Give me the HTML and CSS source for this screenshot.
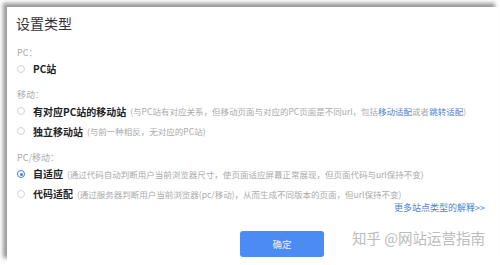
FILE: index.html
```html
<!DOCTYPE html>
<html lang="zh-CN">
  <head>
    <meta charset="UTF-8" />
    <meta name="viewport" content="width=device-width, initial-scale=1.0" />
    <title>设置类型</title>
    <link rel="stylesheet" href="styles.css">
  </head>
  <body>
    <div class="dialog">
      <h1 class="title">设置类型</h1>

      <div class="group">
        <div class="group-label">PC：</div>
        <div class="option">
          <span class="radio"></span>
          <span class="name">PC站</span>
        </div>
      </div>

      <div class="group">
        <div class="group-label">移动：</div>
        <div class="option">
          <span class="radio"></span>
          <span class="name">有对应PC站的移动站</span>
          <span class="desc">(与PC站有对应关系，但移动页面与对应的PC页面是不同url，包括<a class="link">移动适配</a>或者<a class="link">跳转适配</a>)</span>
        </div>
        <div class="option">
          <span class="radio"></span>
          <span class="name">独立移动站</span>
          <span class="desc">(与前一种相反，无对应的PC站)</span>
        </div>
      </div>

      <div class="group">
        <div class="group-label">PC/移动：</div>
        <div class="option">
          <span class="radio checked"></span>
          <span class="name">自适应</span>
          <span class="desc">(通过代码自动判断用户当前浏览器尺寸，使页面适应屏幕正常展现，但页面代码与url保持不变)</span>
        </div>
        <div class="option">
          <span class="radio"></span>
          <span class="name">代码适配</span>
          <span class="desc">(通过服务器判断用户当前浏览器(pc/移动)，从而生成不同版本的页面，但url保持不变)</span>
        </div>
      </div>

      <div class="more"><a class="link">更多站点类型的解释&gt;&gt;</a></div>

      <div class="actions">
        <button class="btn">确定</button>
        <span class="watermark">知乎 @网站运营指南</span>
      </div>
    </div>
  </body>
</html>
```

FILE: styles.css
```css
html,
body {
  height: 100%;
}

body {
  margin: 0;
  padding: 7px 0 0 7px;
  box-sizing: border-box;
  background-color: #fff;
  overflow: hidden;
  font-family: "Noto Sans CJK SC", "Microsoft YaHei", sans-serif;
}

.dialog {
  width: 492px;
  height: 255px;
  box-sizing: border-box;
  padding: 5.5px 14px 0 9px;
  background-color: #fff;
  box-shadow: -4px -4px 4px rgba(0, 0, 0, 0.4);
}

.title {
  margin: 0;
  font-size: 14px;
  font-weight: normal;
  line-height: 20px;
  color: #333;
}

.group {
  margin-top: 10.5px;
}

.group:first-of-type {
  margin-top: 13px;
}

.group-label {
  font-size: 9px;
  line-height: 14px;
  color: #aaa;
  padding-left: 1px;
}

.option {
  display: flex;
  align-items: center;
  height: 18px;
  white-space: nowrap;
}

.option + .option {
  margin-top: 2px;
}

.radio {
  width: 8px;
  height: 8px;
  box-sizing: border-box;
  margin-left: 1px;
  margin-right: 8px;
  border: 1px solid #d4d4d4;
  border-radius: 50%;
  flex-shrink: 0;
}

.radio.checked {
  border-color: #3d7fe6;
  padding: 1.5px;
  background-color: #3d7fe6;
  background-clip: content-box;
}

.name {
  font-size: 10px;
  font-weight: bold;
  color: #222;
}

.desc {
  margin-left: 4px;
  font-size: 8.5px;
  color: #aaa;
}

.link {
  color: #4a7fd4;
  cursor: pointer;
}

.more {
  text-align: right;
  font-size: 9px;
  line-height: 10px;
}

.actions {
  display: flex;
  align-items: flex-start;
  margin-top: 18px;
}

.btn {
  width: 84px;
  height: 26px;
  margin-left: 224px;
  border: none;
  border-radius: 3px;
  background-color: #4b8bf4;
  color: #f0f4ff;
  font-family: inherit;
  font-size: 9.5px;
  padding: 0;
}

.watermark {
  margin-left: 28px;
  margin-top: -3px;
  font-size: 14.5px;
  line-height: 20px;
  color: #bcbcbc;
  white-space: nowrap;
}
```
